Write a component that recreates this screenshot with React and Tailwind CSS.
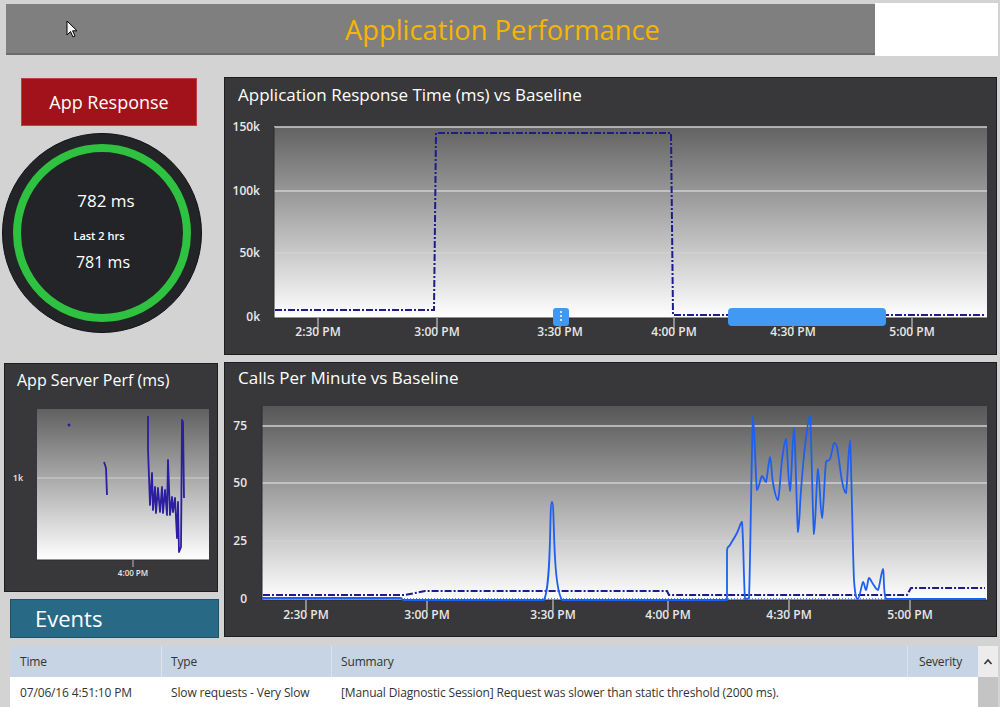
import React from 'react';

const font = { fontFamily: '"Open Sans", "Noto Sans", sans-serif' };

const clamp = (v, a, b) => Math.min(Math.max(v, Math.min(a, b)), Math.max(a, b));

// catmull-rom through the points, control points kept inside each segment's box
function smooth(str) {
  const p = str.split(' ').map((s) => s.split(',').map(Number));
  let d = `M${p[0][0]},${p[0][1]}`;
  for (let i = 0; i < p.length - 1; i++) {
    const a = p[i - 1] || p[i];
    const b = p[i];
    const c = p[i + 1];
    const e = p[i + 2] || c;
    const k = 6;
    const c1x = clamp(b[0] + (c[0] - a[0]) / k, b[0], c[0]);
    const c1y = clamp(b[1] + (c[1] - a[1]) / k, b[1], c[1]);
    const c2x = clamp(c[0] - (e[0] - b[0]) / k, b[0], c[0]);
    const c2y = clamp(c[1] - (e[1] - b[1]) / k, b[1], c[1]);
    d += ` C${c1x},${c1y} ${c2x},${c2y} ${c[0]},${c[1]}`;
  }
  return d;
}

function GridLines({ x1, x2, ys }) {
  return ys.map((y, i) => (
    <line key={i} x1={x1} x2={x2} y1={y} y2={y} stroke="#d0d0d0" strokeWidth="1.5" />
  ));
}

function XAxis({ ticks, y, labelY }) {
  return ticks.map(([x, label]) => (
    <g key={label}>
      <line x1={x} x2={x} y1={y} y2={y + 11} stroke="#a8a8a8" strokeWidth="1.5" />
      <text x={x} y={labelY} textAnchor="middle" fill="#e8e8e8" fontSize="12" fontWeight="600" style={font}>
        {label}
      </text>
    </g>
  ));
}

function YAxis({ items, x }) {
  return items.map(([y, label]) => (
    <text key={label} x={x} y={y + 4} textAnchor="end" fill="#e8e8e8" fontSize="12" fontWeight="600" style={font}>
      {label}
    </text>
  ));
}

function ResponseChart() {
  return (
    <svg width="771" height="238" viewBox="225 116 771 238" className="block">
      <defs>
        <linearGradient id="g1" x1="0" y1="0" x2="0" y2="1">
          <stop offset="0" stopColor="#626262" />
          <stop offset="1" stopColor="#ffffff" />
        </linearGradient>
      </defs>
      <rect x="274" y="127" width="713" height="191" fill="url(#g1)" />
      <GridLines x1={274} x2={987} ys={[127, 191, 253]} />
      <line x1="274" x2="987" y1="318" y2="318" stroke="#2a2a2a" strokeWidth="1" />
      <line x1="274" x2="274" y1="127" y2="318" stroke="#2a2a2a" strokeWidth="1" />
      <YAxis x={260} items={[[127, '150k'], [191, '100k'], [253, '50k'], [317, '0k']]} />
      <XAxis
        y={318}
        labelY={336}
        ticks={[[318, '2:30 PM'], [437, '3:00 PM'], [560, '3:30 PM'], [674, '4:00 PM'], [793, '4:30 PM'], [912, '5:00 PM']]}
      />
      <path
        d="M275,310 L434,310 L436,133 L671,133 L673,315 L985,315"
        fill="none"
        stroke="#1c1c8c"
        strokeWidth="2"
        strokeDasharray="7 2 2 2"
      />
      <rect x="553" y="308" width="16" height="18" rx="3" fill="#3f98f2" />
      <circle cx="561" cy="312" r="1" fill="#fff" />
      <circle cx="561" cy="316" r="1" fill="#fff" />
      <circle cx="561" cy="320" r="1" fill="#fff" />
      <rect x="728" y="308" width="140" height="18" rx="4" fill="#4299f3" />
      <rect x="862" y="308" width="24" height="18" rx="4" fill="#4299f3" />
    </svg>
  );
}

function CallsChart() {
  const blue =
    '262,598 400,598 404,600 544,600 552,502 562,600 727,600 727,551 730,545 737,533 742,522 745,599 749,598 753,417 757,490 762,476 766,482 770,457 773,483 778,500 782,460 786,439 790,491 794,428 798,532 801,490 805,446 810,416 814,534 818,469 822,518 826,462 830,459 834,443 837,447 842,481 846,493 850,441 854,580 858,599 863,582 866,590 869,578 873,584 878,590 883,569 886,599 986,599';
  return (
    <svg width="771" height="243" viewBox="225 393 771 243" className="block">
      <defs>
        <linearGradient id="g2" x1="0" y1="0" x2="0" y2="1">
          <stop offset="0" stopColor="#565656" />
          <stop offset="1" stopColor="#ffffff" />
        </linearGradient>
      </defs>
      <rect x="262" y="406" width="725" height="194" fill="url(#g2)" />
      <GridLines x1={262} x2={987} ys={[426, 483, 541]} />
      <line x1="262" x2="987" y1="600" y2="600" stroke="#2a2a2a" strokeWidth="1" />
      <line x1="262" x2="262" y1="406" y2="600" stroke="#2a2a2a" strokeWidth="1" />
      <YAxis x={247} items={[[426, '75'], [483, '50'], [541, '25'], [599, '0']]} />
      <XAxis
        y={600}
        labelY={619}
        ticks={[[306, '2:30 PM'], [427, '3:00 PM'], [553, '3:30 PM'], [668, '4:00 PM'], [789, '4:30 PM'], [910, '5:00 PM']]}
      />
      <path
        d="M263,595 L405,595 L425,591 L667,591 L669,595 L907,595 L911,588 L985,588"
        fill="none"
        stroke="#1c1c8c"
        strokeWidth="2"
        strokeDasharray="7 2 2 2"
      />
      <line x1="263" x2="985" y1="599" y2="599" stroke="#4a8cf5" strokeWidth="2" strokeDasharray="1 2" />
      <path d={smooth(blue)} fill="none" stroke="#1f5ff0" strokeWidth="1.8" strokeLinejoin="round" />
    </svg>
  );
}

function ServerChart() {
  const cluster =
    '148,416 148,449 150,505 152,473 153,510 155,487 156,513 158,488 160,512 162,487 163,513 165,490 167,515 168,460 170,515 172,497 173,512 175,498 177,538 178,502 179,552 181,547 182,420 183,422 184,498';
  return (
    <svg width="212" height="191" viewBox="5 400 212 191" className="block">
      <defs>
        <linearGradient id="g3" x1="0" y1="0" x2="0" y2="1">
          <stop offset="0" stopColor="#606060" />
          <stop offset="1" stopColor="#ffffff" />
        </linearGradient>
      </defs>
      <rect x="37" y="409" width="172" height="151" fill="url(#g3)" />
      <line x1="37" x2="209" y1="478" y2="478" stroke="#d0d0d0" strokeWidth="1.2" />
      <line x1="37" x2="209" y1="560" y2="560" stroke="#2a2a2a" strokeWidth="1" />
      <text x="18" y="481" textAnchor="middle" fill="#e8e8e8" fontSize="9" fontWeight="600" style={font}>1k</text>
      <line x1="133" x2="133" y1="560" y2="567" stroke="#a8a8a8" strokeWidth="1.2" />
      <text x="133" y="576" textAnchor="middle" fill="#e8e8e8" fontSize="8" fontWeight="600" style={font}>4:00 PM</text>
      <circle cx="69" cy="425" r="1.5" fill="#2c1ea0" />
      <polyline points="104,462 106,468 107,495" fill="none" stroke="#2c1ea0" strokeWidth="1.8" />
      <polyline points={cluster} fill="none" stroke="#2c1ea0" strokeWidth="1.8" strokeLinejoin="round" />
    </svg>
  );
}

export default function App() {
  return (
    <div className="w-[1000px] h-[707px] overflow-hidden bg-[#d3d3d3] relative" style={font}>
      {/* Header */}
      <div className="flex items-start pt-[3px]">
        <div className="ml-[6px] mt-[1px] w-[869px] h-[51px] bg-[#7f7f7f] border-b-2 border-[#6a6a6a] flex items-center pl-[339px] pt-[3px]">
          <span className="text-[27.3px] text-[#f7b500] leading-none">Application Performance</span>
        </div>
        <div className="w-[123px] h-[53px] bg-white" />
      </div>

      <div className="flex">
        {/* Left column */}
        <div className="w-[224px] flex flex-col">
          <div className="ml-[21px] mt-[22px] w-[176px] h-[48px] bg-[#a2121a] border border-[#c04040] flex items-center justify-center text-white text-[18px]">
            App Response
          </div>
          <div className="ml-[2px] mt-[7px] w-[200px] h-[200px] rounded-full bg-[#232428] border border-[#111] flex items-center justify-center">
            <div className="w-[178px] h-[178px] rounded-full border-[8px] border-[#2ec240] flex flex-col items-center justify-center text-white">
              <span className="text-[17px] ml-[8px] mt-[-4px]">782 ms</span>
              <span className="text-[11px] font-semibold mt-[14px] mr-[6px]">Last 2 hrs</span>
              <span className="text-[16px] mt-[6px] ml-[2px]">781 ms</span>
            </div>
          </div>
          <div className="ml-[4px] mt-[30px] w-[214px] h-[229px] bg-[#38383a] border border-[#1e1e1e]">
            <div className="h-[36px] pl-[12px] pt-[4px] text-white text-[16px]">App Server Perf (ms)</div>
            <ServerChart />
          </div>
          <div className="ml-[10px] mt-[7px] w-[209px] h-[39px] bg-[#286a85] border border-[#1d5268] flex items-center pl-[24px] text-white text-[22px]">
            Events
          </div>
        </div>

        {/* Right column */}
        <div className="flex flex-col">
          <div className="mt-[21px] w-[773px] h-[278px] bg-[#38383a] border border-[#1e1e1e]">
            <div className="h-[38px] pl-[13px] pt-[4px] text-white text-[17px]">Application Response Time (ms) vs Baseline</div>
            <ResponseChart />
          </div>
          <div className="mt-[7px] w-[773px] h-[275px] bg-[#38383a] border border-[#1e1e1e]">
            <div className="h-[30px] pl-[13px] pt-[2px] text-white text-[17px]">Calls Per Minute vs Baseline</div>
            <CallsChart />
          </div>
        </div>
      </div>

      {/* Events table */}
      <div className="flex mt-[8px] ml-[10px]">
        <div className="w-[968px] text-[12px] text-[#333] tracking-[-0.15px]">
          <div className="flex h-[31px] bg-[#c7d4e4] items-center">
            <div className="w-[152px] pl-[10px] border-r border-[#dbe3ee] h-full flex items-center">Time</div>
            <div className="w-[170px] pl-[9px] border-r border-[#dbe3ee] h-full flex items-center">Type</div>
            <div className="w-[576px] pl-[9px] border-r border-[#dbe3ee] h-full flex items-center">Summary</div>
            <div className="flex-1 pl-[11px] h-full flex items-center">Severity</div>
          </div>
          <div className="flex h-[31px] bg-white items-center">
            <div className="w-[152px] pl-[10px]">07/06/16 4:51:10 PM</div>
            <div className="w-[170px] pl-[9px]">Slow requests - Very Slow</div>
            <div className="w-[576px] pl-[9px]">[Manual Diagnostic Session] Request was slower than static threshold (2000 ms).</div>
          </div>
        </div>
        <div className="w-[20px] flex flex-col">
          <div className="h-[31px] bg-[#ececec] flex items-center justify-center">
            <svg width="10" height="8" viewBox="0 0 10 8">
              <path d="M1.5 6 L5 2 L8.5 6" fill="none" stroke="#333" strokeWidth="1.6" />
            </svg>
          </div>
          <div className="h-[31px] bg-[#c4c4c4]" />
        </div>
      </div>

      {/* Mouse cursor */}
      <svg className="absolute left-[66px] top-[20px]" width="12" height="19" viewBox="0 0 12 19">
        <path d="M1 1 L1 15 L4.5 11.5 L7 17 L9 16 L6.6 10.8 L11 10.8 Z" fill="#fff" stroke="#000" strokeWidth="1" />
      </svg>
    </div>
  );
}
